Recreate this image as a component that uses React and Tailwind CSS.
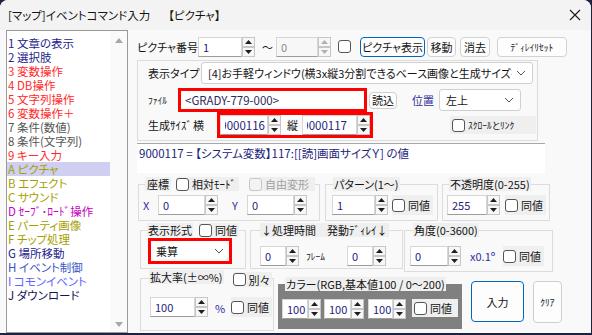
import React from "react";

const LIST = [
  ["1 文章の表示", "text-[#23238c]"],
  ["2 選択肢", "text-[#23238c]"],
  ["3 変数操作", "text-[#ff2a2a]"],
  ["4 DB操作", "text-[#ff2a2a]"],
  ["5 文字列操作", "text-[#ff2a2a]"],
  ["6 変数操作＋", "text-[#ff2a2a]"],
  ["7 条件(数値)", "text-[#555555]"],
  ["8 条件(文字列)", "text-[#555555]"],
  ["9 キー入力", "text-[#ff2a2a]"],
  ["A ピクチャ", "text-[#a59f00]"],
  ["B エフェクト", "text-[#a59f00]"],
  ["C サウンド", "text-[#a59f00]"],
  ["D ｾｰﾌﾞ･ﾛｰﾄﾞ操作", "text-[#c800c0]"],
  ["E パーティ画像", "text-[#a59f00]"],
  ["F チップ処理", "text-[#a59f00]"],
  ["G 場所移動", "text-[#23238c]"],
  ["H イベント制御", "text-[#3c55c8]"],
  ["I コモンイベント", "text-[#6464ff]"],
  ["J ダウンロード", "text-[#141450]"],
];

function Arrow({ up, disabled }) {
  return (
    <div className="flex h-[10px] w-[13px] items-center justify-center border border-[#c6c6c6] bg-[#f7f7f7]">
      <svg width="7" height="4" viewBox="0 0 7 4">
        <path d={up ? "M0 4L3.5 0L7 4Z" : "M0 0L3.5 4L7 0Z"} fill={disabled ? "#b0b0b0" : "#1e1e1e"} />
      </svg>
    </div>
  );
}

function SpinBox({ w, value, disabled, children }) {
  return (
    <div className="flex h-[20px] shrink-0">
      <div
        className={`flex items-center overflow-hidden border border-[#d6d6d6] border-b-[#9c9c9c] pl-[4px] ${w} ${
          disabled ? "bg-[#f7f7f7] text-[#8c8c8c]" : "bg-white text-[#24247a]"
        }`}
      >
        {children || value}
      </div>
      <div className="flex flex-col">
        <Arrow up disabled={disabled} />
        <Arrow disabled={disabled} />
      </div>
    </div>
  );
}

// text box scrolled to the right end, first digit cut off
function Scrolled({ value }) {
  return (
    <div className="flex w-[40px] justify-end overflow-hidden text-[11.5px]">
      <span>{value}</span>
    </div>
  );
}

function Check({ label, disabled, className = "" }) {
  return (
    <div className={`flex items-center gap-[3px] ${className}`}>
      <span
        className={`h-[13px] w-[13px] shrink-0 rounded-[3px] border ${
          disabled ? "border-[#c8c8c8] bg-[#f3f3f3]" : "border-[#555555] bg-white"
        }`}
      />
      {label && <span className={disabled ? "text-[#a0a0a0]" : ""}>{label}</span>}
    </div>
  );
}

function Chevron() {
  return (
    <svg width="10" height="6" viewBox="0 0 10 6" className="shrink-0">
      <path d="M1 1L5 5L9 1" fill="none" stroke="#555" strokeWidth="1" />
    </svg>
  );
}

function Btn({ className = "", children }) {
  return (
    <div
      className={`flex shrink-0 items-center justify-center rounded-[4px] border bg-[#fdfdfd] ${className}`}
    >
      {children}
    </div>
  );
}

function Close() {
  return (
    <svg width="12" height="12" viewBox="0 0 12 12">
      <path d="M1 1L11 11M11 1L1 11" stroke="#1a1a1a" strokeWidth="1.1" />
    </svg>
  );
}

export default function App() {
  return (
    <div className="h-[335px] w-[592px] overflow-hidden whitespace-nowrap bg-[#1c2240] font-['Noto_Sans_CJK_JP','Noto_Sans',sans-serif] text-[11px] leading-[14px] text-[#141414] [font-feature-settings:'palt']">
      <div className="flex h-[333px] w-[591px] flex-col rounded-t-[8px] bg-[#f9f9f9]">
        {/* title bar */}
        <div className="flex h-[30px] shrink-0 items-center rounded-t-[8px] bg-[#f3f3f3] pl-[8px] pr-[10px] text-[11.5px]">
          <span>[マップ]イベントコマンド入力</span>
          <span className="ml-[18px]">【ピクチャ】</span>
          <div className="ml-auto">
            <Close />
          </div>
        </div>

        <div className="flex">
          {/* command list */}
          <div className="ml-[6px] flex h-[303px] w-[122px] shrink-0 border border-[#9a9a9a] bg-white">
            <div className="flex w-[103px] flex-col pt-[5px]">
              {LIST.map(([t, c], i) => (
                <div
                  key={t}
                  className={`flex h-[14px] items-center pl-[1px] text-[11.5px] ${c} ${i === 9 ? "bg-[#cfcff2]" : ""}`}
                >
                  {t}
                </div>
              ))}
            </div>
            <div className="flex flex-1 flex-col items-center justify-between bg-[#fafafa] pb-[5px] pt-[7px]">
              <svg width="8" height="5" viewBox="0 0 8 5">
                <path d="M0 5L4 0L8 5Z" fill="#a8a8a8" />
              </svg>
              <svg width="8" height="5" viewBox="0 0 8 5">
                <path d="M0 0L4 5L8 0Z" fill="#a8a8a8" />
              </svg>
            </div>
          </div>

          {/* right panel */}
          <div className="ml-[8px] flex w-[455px] flex-col">
            {/* row 1 */}
            <div className="mt-[5px] flex h-[23px] items-center">
              <span className="ml-[1px] w-[61px] shrink-0">ピクチャ番号</span>
              <SpinBox w="w-[44px]" value="1" />
              <span className="ml-[7px] w-[14px]">～</span>
              <SpinBox w="w-[42px]" value="0" disabled />
              <Check className="ml-[7px]" />
              <Btn className="ml-[9px] h-[20px] w-[65px] border-[#0067c0] bg-[#cce4f7]">ピクチャ表示</Btn>
              <Btn className="ml-[2px] h-[20px] w-[29px] border-[#d2d2d2]">移動</Btn>
              <Btn className="ml-[4px] h-[20px] w-[30px] border-[#d2d2d2]">消去</Btn>
              <Btn className="ml-[7px] h-[20px] w-[70px] border-[#d2d2d2] text-[9.5px]">ﾃﾞｨﾚｲﾘｾｯﾄ</Btn>
            </div>

            {/* display type group */}
            <div className="ml-[1px] mt-[2px] flex h-[81px] w-[401px] flex-col border border-[#dcdcdc]">
              <div className="mt-[1px] flex h-[22px] items-center">
                <span className="ml-[10px] w-[53px] shrink-0">表示タイプ</span>
                <div className="flex h-[22px] w-[332px] items-center justify-between rounded-[3px] border border-[#d0d0d0] bg-white pl-[6px] pr-[6px]">
                  <span className="overflow-hidden">
                    [4]お手軽ウィンドウ(横3x縦3分割できるベース画像と生成サイズを指定
                  </span>
                  <span className="ml-[4px]">
                    <Chevron />
                  </span>
                </div>
              </div>
              <div className="mt-[4px] flex h-[24px] items-center">
                <span className="ml-[10px] w-[30px] shrink-0 text-[9.5px]">ﾌｧｲﾙ</span>
                <div className="flex h-[24px] w-[189px] items-center border-[3px] border-[#ff0000] bg-white pl-[4px] text-[11.5px] text-[#2a2a5a]">
                  &lt;GRADY-779-000&gt;
                </div>
                <Btn className="ml-[2px] h-[17px] w-[28px] border-[#cfcfcf]">読込</Btn>
                <span className="ml-[15px] w-[27px] text-[#2f2fa0]">位置</span>
                <div className="flex h-[22px] w-[82px] items-center justify-between rounded-[3px] border border-[#d0d0d0] bg-white px-[6px]">
                  <span>左上</span>
                  <Chevron />
                </div>
              </div>
              <div className="flex h-[26px] items-center">
                <span className="ml-[10px] w-[45px] shrink-0">生成ｻｲｽﾞ</span>
                <span className="w-[24px] shrink-0">横</span>
                <div className="flex h-[26px] w-[156px] items-center border-[3px] border-[#ff0000] bg-white">
                  <SpinBox w="w-[48px]">
                    <Scrolled value="9000116" />
                  </SpinBox>
                  <span className="ml-[6px] w-[15px] bg-[#f9f9f9]">縦</span>
                  <SpinBox w="w-[55px]">
                    <Scrolled value="9000117" />
                  </SpinBox>
                </div>
                <div className="ml-auto mr-[1px] flex h-[18px] w-[86px] items-center bg-[#efefef] pl-[2px] text-[9.5px]">
                  <Check label="ｽｸﾛｰﾙとﾘﾝｸ" />
                </div>
              </div>
            </div>

            {/* info text */}
            <div className="ml-[1px] mt-[2px] h-[30px] w-[408px] border-t border-[#a8a8a8] bg-white pl-[2px] pt-[2px] text-[11.5px] text-[#24247a]">
              9000117 = 【システム変数】117:[[読]画面サイズＹ] の値
            </div>

            {/* groups row 1 */}
            <div className="mt-[4px] flex items-start">
              <fieldset className="ml-[2px] w-[182px] border border-[#dcdcdc]">
                <legend className="ml-[6px] flex items-center gap-[5px]">
                  <span className="bg-[#efefef] px-[2px]">座標</span>
                  <Check label="相対ﾓｰﾄﾞ" className="bg-[#efefef] pr-[3px]" />
                  <Check label="自由変形" disabled className="ml-[5px] bg-[#efefef] pr-[6px]" />
                </legend>
                <div className="flex h-[29px] items-start pt-[4px]">
                  <span className="ml-[4px] mt-[3px] w-[15px] text-[#2f2fa0]">X</span>
                  <SpinBox w="w-[47px]" value="0" />
                  <span className="ml-[14px] mt-[3px] w-[15px] text-[#2f2fa0]">Y</span>
                  <SpinBox w="w-[47px]" value="0" />
                </div>
              </fieldset>
              <fieldset className="ml-[5px] w-[113px] border border-[#dcdcdc]">
                <legend className="ml-[7px] bg-[#efefef] px-[1px]">パターン(1～)</legend>
                <div className="flex h-[29px] items-start pt-[4px]">
                  <div className="ml-[6px]">
                    <SpinBox w="w-[43px]" value="1" />
                  </div>
                  <Check label="同値" className="ml-[4px] h-[20px] bg-[#efefef] pr-[3px]" />
                </div>
              </fieldset>
              <fieldset className="ml-[4px] w-[108px] border border-[#dcdcdc]">
                <legend className="ml-[6px] bg-[#efefef] px-[1px]">不透明度(0-255)</legend>
                <div className="flex h-[29px] items-start pt-[4px]">
                  <div className="ml-[4px]">
                    <SpinBox w="w-[40px]" value="255" />
                  </div>
                  <Check label="同値" className="ml-[5px] h-[20px] bg-[#efefef] pr-[3px]" />
                </div>
              </fieldset>
            </div>

            {/* groups row 2 */}
            <div className="mt-[2px] flex items-start">
              <fieldset className="ml-[4px] w-[106px] border border-[#dcdcdc]">
                <legend className="ml-[6px] flex items-center gap-[6px]">
                  <span className="bg-[#efefef] px-[1px]">表示形式</span>
                  <Check label="同値" className="bg-[#efefef] pr-[2px]" />
                </legend>
                <div className="flex h-[31px] items-start pt-[1px]">
                  <div className="ml-[7px] flex h-[26px] w-[84px] items-center justify-between border-[3px] border-[#ff0000] bg-white px-[5px]">
                    <span>乗算</span>
                    <Chevron />
                  </div>
                </div>
              </fieldset>
              <fieldset className="ml-[4px] w-[153px] border border-[#dcdcdc]">
                <legend className="ml-[9px] bg-[#efefef] px-[1px]">↓処理時間　発動ﾃﾞｨﾚｲ↓</legend>
                <div className="flex h-[31px] items-start pt-[9px]">
                  <div className="ml-[9px]">
                    <SpinBox w="w-[26px]" value="0" />
                  </div>
                  <span className="ml-[7px] mt-[3px] w-[41px] text-[9.5px]">ﾌﾚｰﾑ</span>
                  <SpinBox w="w-[26px]" value="0" />
                </div>
              </fieldset>
              <fieldset className="ml-[1px] w-[149px] border border-[#dcdcdc]">
                <legend className="ml-[8px] bg-[#efefef] px-[1px]">角度(0-3600)</legend>
                <div className="flex h-[34px] items-start pt-[9px]">
                  <div className="ml-[5px]">
                    <SpinBox w="w-[38px]" value="0" />
                  </div>
                  <span className="ml-[9px] mt-[3px] w-[33px] text-[#2f2fa0]">x0.1º</span>
                  <Check label="同値" className="h-[20px] bg-[#efefef] pr-[3px]" />
                </div>
              </fieldset>
            </div>

            {/* bottom row */}
            <div className="flex items-start">
              <fieldset className="-mt-[2px] ml-[4px] w-[134px] border border-[#dcdcdc]">
                <legend className="ml-[8px] flex items-start">
                  <span className="bg-[#efefef] px-[1px]">拡大率(±∞%)</span>
                  <Check label="別々" className="ml-[9px] mt-[2px] h-[15px] bg-[#efefef] pr-[2px]" />
                </legend>
                <div className="flex h-[43px] items-start pt-[10px]">
                  <div className="ml-[9px]">
                    <SpinBox w="w-[45px]" value="100" />
                  </div>
                  <span className="ml-[7px] mt-[4px] w-[16px] text-[#2f2fa0]">%</span>
                  <Check label="同値" className="h-[20px] bg-[#efefef] pr-[3px]" />
                </div>
              </fieldset>
              <fieldset className="ml-[4px] mt-[5px] w-[184px] bg-[#808080]">
                <legend className="ml-[7px] bg-[#efefef] px-[1px]">カラー(RGB,基本値100 / 0～200)</legend>
                <div className="flex h-[38px] items-start pt-[8px]">
                  <div className="ml-[4px]">
                    <SpinBox w="w-[26px]" value="100" />
                  </div>
                  <div className="ml-[3px]">
                    <SpinBox w="w-[27px]" value="100" />
                  </div>
                  <div className="ml-[4px]">
                    <SpinBox w="w-[25px]" value="100" />
                  </div>
                  <Check label="同値" className="ml-[6px] h-[18px] w-[46px] bg-[#efefef] pl-[2px]" />
                </div>
              </fieldset>
              <Btn className="ml-[9px] mt-[9px] h-[41px] w-[53px] border-[#0067c0]">入力</Btn>
              <Btn className="ml-[9px] mt-[9px] h-[42px] w-[29px] border-[#cfcfcf] text-[9.5px]">ｸﾘｱ</Btn>
            </div>
          </div>
        </div>
      </div>
    </div>
  );
}
